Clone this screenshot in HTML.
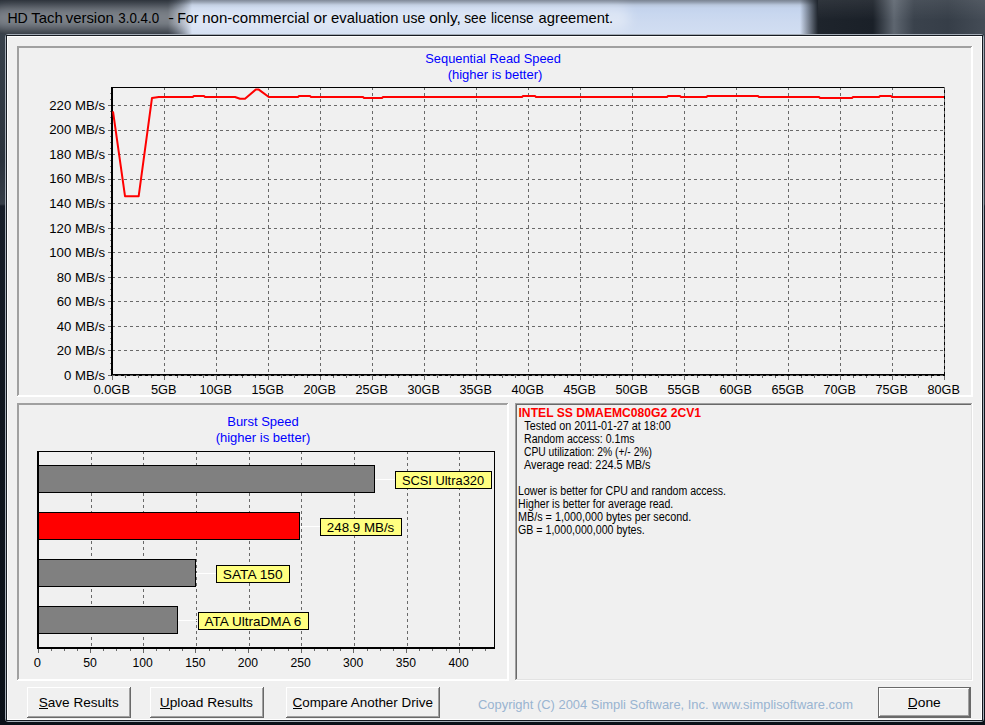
<!DOCTYPE html>
<html><head><meta charset="utf-8"><title>HD Tach</title>
<style>
html,body{margin:0;padding:0;}
body{width:985px;height:725px;overflow:hidden;position:relative;background:#141a23;font-family:"Liberation Sans",sans-serif;}
#frame{position:absolute;left:0;top:0;width:985px;height:725px;
 background:linear-gradient(to bottom,#3a434e 0px,#38414b 40px,#2a323c 160px,#343c46 200px,#363e48 204px,#171e29 206px,#10161f 420px,#0a1018 725px);}
#tb{position:absolute;left:0;top:0;width:985px;height:34px;overflow:hidden;
 background:
  linear-gradient(to right,rgba(52,60,71,1) 0px,rgba(52,60,71,1) 168px,rgba(52,60,71,0) 192px,rgba(30,36,44,0) 800px,rgba(30,36,44,1) 818px,rgba(30,36,44,1) 985px),
  linear-gradient(to bottom,#7a8492 0px,#8f9aab 2px,#b9c7dd 5px,#c4d3ec 8px,#c8d7ef 14px,#cddaf0 22px,#d2def2 34px);}
#tbL{position:absolute;left:0;top:0;width:200px;height:34px;
 background:linear-gradient(to bottom,rgba(30,36,44,.75) 0px,rgba(30,36,44,0) 10px,rgba(30,36,44,0) 24px,rgba(30,36,44,.55) 34px);
 -webkit-mask-image:linear-gradient(to right,#000 0,#000 168px,transparent 192px);mask-image:linear-gradient(to right,#000 0,#000 168px,transparent 192px);}
#tbR{position:absolute;left:818px;top:0;width:167px;height:34px;
 background:linear-gradient(to bottom,rgba(255,255,255,.08) 0,rgba(255,255,255,0) 20px),linear-gradient(to right,#1e242c 0,#1a2028 55px,#5e6670 76px,#3a424c 96px,#363e48 130px,#444c56 167px);}
#glow{position:absolute;left:-10px;top:6px;width:640px;height:24px;border-radius:12px;background:rgba(255,255,255,.36);filter:blur(6px);}
#edgeL{position:absolute;left:5px;top:34px;width:979px;height:688px;box-sizing:border-box;border:1px solid #a3abb5;border-radius:3px;}
#edgeD{position:absolute;left:6px;top:35px;width:977px;height:686px;box-sizing:border-box;border:1px solid #161b22;}
#client{position:absolute;left:7px;top:36px;width:975px;height:684px;background:#f0f0f0;box-sizing:border-box;border:1px solid #fff;}
svg{position:absolute;left:0;top:0;}
text{font-family:"Liberation Sans",sans-serif;}
.a{font-size:13.2px;fill:#000;}
.b{font-size:13px;fill:#0000ff;}
.i{font-size:12px;fill:#000;font-family:"Liberation Sans",sans-serif;}
</style></head><body>
<div id="frame"></div>
<div id="tb"><div id="tbL"></div><div id="tbR"></div><div id="glow"></div></div>
<div id="edgeL"></div><div id="edgeD"></div>
<div id="client"></div>
<svg width="985" height="725" viewBox="0 0 985 725">

<text y="22.5" style="font-size:14.6px;fill:#000"><tspan x="7.4" textLength="20.4" lengthAdjust="spacingAndGlyphs">HD</tspan> <tspan x="31.2" textLength="31.5" lengthAdjust="spacingAndGlyphs">Tach</tspan> <tspan x="65.7" textLength="48.1" lengthAdjust="spacingAndGlyphs">version</tspan> <tspan x="118.3" textLength="40.8" lengthAdjust="spacingAndGlyphs">3.0.4.0</tspan> <tspan x="168.3" textLength="5.7" lengthAdjust="spacingAndGlyphs">-</tspan> <tspan x="177.2" textLength="21.3" lengthAdjust="spacingAndGlyphs">For</tspan> <tspan x="202.2" textLength="107.1" lengthAdjust="spacingAndGlyphs">non-commercial</tspan> <tspan x="313.4" textLength="13.6" lengthAdjust="spacingAndGlyphs">or</tspan> <tspan x="331.1" textLength="67.5" lengthAdjust="spacingAndGlyphs">evaluation</tspan> <tspan x="402.6" textLength="22.6" lengthAdjust="spacingAndGlyphs">use</tspan> <tspan x="429.2" textLength="31.7" lengthAdjust="spacingAndGlyphs">only,</tspan> <tspan x="464.2" textLength="22.1" lengthAdjust="spacingAndGlyphs">see</tspan> <tspan x="490.9" textLength="42.8" lengthAdjust="spacingAndGlyphs">license</tspan> <tspan x="538.6" textLength="74.6" lengthAdjust="spacingAndGlyphs">agreement.</tspan></text>
<g shape-rendering="crispEdges"><rect x="17" y="46" width="956" height="1" fill="#a0a0a0"/><rect x="17" y="46" width="1" height="351" fill="#a0a0a0"/><rect x="18" y="47" width="954" height="1" fill="#a0a0a0"/><rect x="18" y="47" width="1" height="349" fill="#a0a0a0"/><rect x="17" y="396" width="956" height="1" fill="#ffffff"/><rect x="972" y="46" width="1" height="351" fill="#ffffff"/><rect x="18" y="395" width="954" height="1" fill="#ffffff"/><rect x="971" y="47" width="1" height="349" fill="#ffffff"/></g>

<g shape-rendering="crispEdges"><rect x="17" y="403" width="492" height="1" fill="#a0a0a0"/><rect x="17" y="403" width="1" height="278" fill="#a0a0a0"/><rect x="18" y="404" width="490" height="1" fill="#a0a0a0"/><rect x="18" y="404" width="1" height="276" fill="#a0a0a0"/><rect x="17" y="680" width="492" height="1" fill="#ffffff"/><rect x="508" y="403" width="1" height="278" fill="#ffffff"/><rect x="18" y="679" width="490" height="1" fill="#ffffff"/><rect x="507" y="404" width="1" height="276" fill="#ffffff"/></g>

<g shape-rendering="crispEdges"><rect x="515" y="403" width="458" height="1" fill="#a0a0a0"/><rect x="515" y="403" width="1" height="278" fill="#a0a0a0"/><rect x="516" y="404" width="456" height="1" fill="#696969"/><rect x="516" y="404" width="1" height="276" fill="#696969"/><rect x="515" y="680" width="458" height="1" fill="#ffffff"/><rect x="972" y="403" width="1" height="278" fill="#ffffff"/><rect x="516" y="679" width="456" height="1" fill="#e3e3e3"/><rect x="971" y="404" width="1" height="276" fill="#e3e3e3"/></g>

<g shape-rendering="crispEdges">
<line x1="112" y1="375.5" x2="945" y2="375.5" stroke="#696969" stroke-width="1" stroke-dasharray="3,3"/>
<line x1="112" y1="350.5" x2="945" y2="350.5" stroke="#696969" stroke-width="1" stroke-dasharray="3,3"/>
<line x1="112" y1="326.5" x2="945" y2="326.5" stroke="#696969" stroke-width="1" stroke-dasharray="3,3"/>
<line x1="112" y1="301.5" x2="945" y2="301.5" stroke="#696969" stroke-width="1" stroke-dasharray="3,3"/>
<line x1="112" y1="277.5" x2="945" y2="277.5" stroke="#696969" stroke-width="1" stroke-dasharray="3,3"/>
<line x1="112" y1="252.5" x2="945" y2="252.5" stroke="#696969" stroke-width="1" stroke-dasharray="3,3"/>
<line x1="112" y1="228.5" x2="945" y2="228.5" stroke="#696969" stroke-width="1" stroke-dasharray="3,3"/>
<line x1="112" y1="203.5" x2="945" y2="203.5" stroke="#696969" stroke-width="1" stroke-dasharray="3,3"/>
<line x1="112" y1="179.5" x2="945" y2="179.5" stroke="#696969" stroke-width="1" stroke-dasharray="3,3"/>
<line x1="112" y1="154.5" x2="945" y2="154.5" stroke="#696969" stroke-width="1" stroke-dasharray="3,3"/>
<line x1="112" y1="130.5" x2="945" y2="130.5" stroke="#696969" stroke-width="1" stroke-dasharray="3,3"/>
<line x1="112" y1="105.5" x2="945" y2="105.5" stroke="#696969" stroke-width="1" stroke-dasharray="3,3"/>
<line x1="164.5" y1="87" x2="164.5" y2="376" stroke="#696969" stroke-width="1" stroke-dasharray="3,3"/>
<line x1="216.5" y1="87" x2="216.5" y2="376" stroke="#696969" stroke-width="1" stroke-dasharray="3,3"/>
<line x1="268.5" y1="87" x2="268.5" y2="376" stroke="#696969" stroke-width="1" stroke-dasharray="3,3"/>
<line x1="320.5" y1="87" x2="320.5" y2="376" stroke="#696969" stroke-width="1" stroke-dasharray="3,3"/>
<line x1="372.5" y1="87" x2="372.5" y2="376" stroke="#696969" stroke-width="1" stroke-dasharray="3,3"/>
<line x1="424.5" y1="87" x2="424.5" y2="376" stroke="#696969" stroke-width="1" stroke-dasharray="3,3"/>
<line x1="476.5" y1="87" x2="476.5" y2="376" stroke="#696969" stroke-width="1" stroke-dasharray="3,3"/>
<line x1="528.5" y1="87" x2="528.5" y2="376" stroke="#696969" stroke-width="1" stroke-dasharray="3,3"/>
<line x1="580.5" y1="87" x2="580.5" y2="376" stroke="#696969" stroke-width="1" stroke-dasharray="3,3"/>
<line x1="632.5" y1="87" x2="632.5" y2="376" stroke="#696969" stroke-width="1" stroke-dasharray="3,3"/>
<line x1="684.5" y1="87" x2="684.5" y2="376" stroke="#696969" stroke-width="1" stroke-dasharray="3,3"/>
<line x1="736.5" y1="87" x2="736.5" y2="376" stroke="#696969" stroke-width="1" stroke-dasharray="3,3"/>
<line x1="788.5" y1="87" x2="788.5" y2="376" stroke="#696969" stroke-width="1" stroke-dasharray="3,3"/>
<line x1="840.5" y1="87" x2="840.5" y2="376" stroke="#696969" stroke-width="1" stroke-dasharray="3,3"/>
<line x1="892.5" y1="87" x2="892.5" y2="376" stroke="#696969" stroke-width="1" stroke-dasharray="3,3"/>
<line x1="944.5" y1="87" x2="944.5" y2="376" stroke="#696969" stroke-width="1" stroke-dasharray="3,3"/>
<rect x="108" y="375" width="3" height="1" fill="#696969"/>
<rect x="110" y="369" width="1" height="1" fill="#808080"/>
<rect x="110" y="363" width="1" height="1" fill="#808080"/>
<rect x="110" y="357" width="1" height="1" fill="#808080"/>
<rect x="108" y="350" width="3" height="1" fill="#696969"/>
<rect x="110" y="344" width="1" height="1" fill="#808080"/>
<rect x="110" y="338" width="1" height="1" fill="#808080"/>
<rect x="110" y="332" width="1" height="1" fill="#808080"/>
<rect x="108" y="326" width="3" height="1" fill="#696969"/>
<rect x="110" y="320" width="1" height="1" fill="#808080"/>
<rect x="110" y="314" width="1" height="1" fill="#808080"/>
<rect x="110" y="308" width="1" height="1" fill="#808080"/>
<rect x="108" y="301" width="3" height="1" fill="#696969"/>
<rect x="110" y="295" width="1" height="1" fill="#808080"/>
<rect x="110" y="289" width="1" height="1" fill="#808080"/>
<rect x="110" y="283" width="1" height="1" fill="#808080"/>
<rect x="108" y="277" width="3" height="1" fill="#696969"/>
<rect x="110" y="271" width="1" height="1" fill="#808080"/>
<rect x="110" y="265" width="1" height="1" fill="#808080"/>
<rect x="110" y="258" width="1" height="1" fill="#808080"/>
<rect x="108" y="252" width="3" height="1" fill="#696969"/>
<rect x="110" y="246" width="1" height="1" fill="#808080"/>
<rect x="110" y="240" width="1" height="1" fill="#808080"/>
<rect x="110" y="234" width="1" height="1" fill="#808080"/>
<rect x="108" y="228" width="3" height="1" fill="#696969"/>
<rect x="110" y="222" width="1" height="1" fill="#808080"/>
<rect x="110" y="215" width="1" height="1" fill="#808080"/>
<rect x="110" y="209" width="1" height="1" fill="#808080"/>
<rect x="108" y="203" width="3" height="1" fill="#696969"/>
<rect x="110" y="197" width="1" height="1" fill="#808080"/>
<rect x="110" y="191" width="1" height="1" fill="#808080"/>
<rect x="110" y="185" width="1" height="1" fill="#808080"/>
<rect x="108" y="179" width="3" height="1" fill="#696969"/>
<rect x="110" y="172" width="1" height="1" fill="#808080"/>
<rect x="110" y="166" width="1" height="1" fill="#808080"/>
<rect x="110" y="160" width="1" height="1" fill="#808080"/>
<rect x="108" y="154" width="3" height="1" fill="#696969"/>
<rect x="110" y="148" width="1" height="1" fill="#808080"/>
<rect x="110" y="142" width="1" height="1" fill="#808080"/>
<rect x="110" y="136" width="1" height="1" fill="#808080"/>
<rect x="108" y="130" width="3" height="1" fill="#696969"/>
<rect x="110" y="123" width="1" height="1" fill="#808080"/>
<rect x="110" y="117" width="1" height="1" fill="#808080"/>
<rect x="110" y="111" width="1" height="1" fill="#808080"/>
<rect x="108" y="105" width="3" height="1" fill="#696969"/>
<rect x="110" y="99" width="1" height="1" fill="#808080"/>
<rect x="110" y="93" width="1" height="1" fill="#808080"/>
<rect x="112" y="376" width="1" height="4" fill="#696969"/>
<rect x="125" y="376" width="1" height="2" fill="#696969"/>
<rect x="138" y="376" width="1" height="2" fill="#696969"/>
<rect x="151" y="376" width="1" height="2" fill="#696969"/>
<rect x="164" y="376" width="1" height="4" fill="#696969"/>
<rect x="177" y="376" width="1" height="2" fill="#696969"/>
<rect x="190" y="376" width="1" height="2" fill="#696969"/>
<rect x="203" y="376" width="1" height="2" fill="#696969"/>
<rect x="216" y="376" width="1" height="4" fill="#696969"/>
<rect x="229" y="376" width="1" height="2" fill="#696969"/>
<rect x="242" y="376" width="1" height="2" fill="#696969"/>
<rect x="255" y="376" width="1" height="2" fill="#696969"/>
<rect x="268" y="376" width="1" height="4" fill="#696969"/>
<rect x="281" y="376" width="1" height="2" fill="#696969"/>
<rect x="294" y="376" width="1" height="2" fill="#696969"/>
<rect x="307" y="376" width="1" height="2" fill="#696969"/>
<rect x="320" y="376" width="1" height="4" fill="#696969"/>
<rect x="333" y="376" width="1" height="2" fill="#696969"/>
<rect x="346" y="376" width="1" height="2" fill="#696969"/>
<rect x="359" y="376" width="1" height="2" fill="#696969"/>
<rect x="372" y="376" width="1" height="4" fill="#696969"/>
<rect x="385" y="376" width="1" height="2" fill="#696969"/>
<rect x="398" y="376" width="1" height="2" fill="#696969"/>
<rect x="411" y="376" width="1" height="2" fill="#696969"/>
<rect x="424" y="376" width="1" height="4" fill="#696969"/>
<rect x="437" y="376" width="1" height="2" fill="#696969"/>
<rect x="450" y="376" width="1" height="2" fill="#696969"/>
<rect x="463" y="376" width="1" height="2" fill="#696969"/>
<rect x="476" y="376" width="1" height="4" fill="#696969"/>
<rect x="489" y="376" width="1" height="2" fill="#696969"/>
<rect x="502" y="376" width="1" height="2" fill="#696969"/>
<rect x="515" y="376" width="1" height="2" fill="#696969"/>
<rect x="528" y="376" width="1" height="4" fill="#696969"/>
<rect x="541" y="376" width="1" height="2" fill="#696969"/>
<rect x="554" y="376" width="1" height="2" fill="#696969"/>
<rect x="567" y="376" width="1" height="2" fill="#696969"/>
<rect x="580" y="376" width="1" height="4" fill="#696969"/>
<rect x="593" y="376" width="1" height="2" fill="#696969"/>
<rect x="606" y="376" width="1" height="2" fill="#696969"/>
<rect x="619" y="376" width="1" height="2" fill="#696969"/>
<rect x="632" y="376" width="1" height="4" fill="#696969"/>
<rect x="645" y="376" width="1" height="2" fill="#696969"/>
<rect x="658" y="376" width="1" height="2" fill="#696969"/>
<rect x="671" y="376" width="1" height="2" fill="#696969"/>
<rect x="684" y="376" width="1" height="4" fill="#696969"/>
<rect x="697" y="376" width="1" height="2" fill="#696969"/>
<rect x="710" y="376" width="1" height="2" fill="#696969"/>
<rect x="723" y="376" width="1" height="2" fill="#696969"/>
<rect x="736" y="376" width="1" height="4" fill="#696969"/>
<rect x="749" y="376" width="1" height="2" fill="#696969"/>
<rect x="762" y="376" width="1" height="2" fill="#696969"/>
<rect x="775" y="376" width="1" height="2" fill="#696969"/>
<rect x="788" y="376" width="1" height="4" fill="#696969"/>
<rect x="801" y="376" width="1" height="2" fill="#696969"/>
<rect x="814" y="376" width="1" height="2" fill="#696969"/>
<rect x="827" y="376" width="1" height="2" fill="#696969"/>
<rect x="840" y="376" width="1" height="4" fill="#696969"/>
<rect x="853" y="376" width="1" height="2" fill="#696969"/>
<rect x="866" y="376" width="1" height="2" fill="#696969"/>
<rect x="879" y="376" width="1" height="2" fill="#696969"/>
<rect x="892" y="376" width="1" height="4" fill="#696969"/>
<rect x="905" y="376" width="1" height="2" fill="#696969"/>
<rect x="918" y="376" width="1" height="2" fill="#696969"/>
<rect x="931" y="376" width="1" height="2" fill="#696969"/>
<rect x="944" y="376" width="1" height="4" fill="#696969"/>
<rect x="111" y="87" width="834" height="1" fill="#000"/>
<rect x="111" y="87" width="2" height="289" fill="#000"/>
<rect x="111" y="374" width="834" height="2" fill="#000"/>
<rect x="944" y="87" width="1" height="289" fill="#000"/>
<line x1="112" y1="375.5" x2="945" y2="375.5" stroke="#696969" stroke-width="1" stroke-dasharray="3,3"/>
<line x1="944.5" y1="87" x2="944.5" y2="374" stroke="#696969" stroke-width="1" stroke-dasharray="3,3"/>
</g>
<polyline fill="none" stroke="#ff0000" stroke-width="2" stroke-linejoin="round" points="113,111.4 125,196.2 138.7,196.2 152,97.9 158.8,97 192.8,97 193.8,96 204,96 205,97 235,97 240,98.8 245,98.8 255.8,89.6 258.8,89.6 268.8,97 298,97 299,96 310,96 311,97 363,97 364,98 382,98 383,97 522,97 523,96 535,96 536,97 667,97 668,96 680,96 681,97 706.5,97 707.5,96 758,96 759,97 819,97 820,98 852,98 853,97 879,97 880,96 891,96 892,97 944,97"/>
<text class="a" x="105" y="379.8" text-anchor="end">0 MB/s</text>
<text class="a" x="105" y="355.3" text-anchor="end">20 MB/s</text>
<text class="a" x="105" y="330.7" text-anchor="end">40 MB/s</text>
<text class="a" x="105" y="306.2" text-anchor="end">60 MB/s</text>
<text class="a" x="105" y="281.6" text-anchor="end">80 MB/s</text>
<text class="a" x="105" y="257.1" text-anchor="end">100 MB/s</text>
<text class="a" x="105" y="232.5" text-anchor="end">120 MB/s</text>
<text class="a" x="105" y="208.0" text-anchor="end">140 MB/s</text>
<text class="a" x="105" y="183.4" text-anchor="end">160 MB/s</text>
<text class="a" x="105" y="158.9" text-anchor="end">180 MB/s</text>
<text class="a" x="105" y="134.3" text-anchor="end">200 MB/s</text>
<text class="a" x="105" y="109.8" text-anchor="end">220 MB/s</text>
<text class="a" x="93.4" y="393.5" textLength="36.6" lengthAdjust="spacingAndGlyphs">0.0GB</text>
<text class="a" x="150.9" y="393.5" textLength="25.6" lengthAdjust="spacingAndGlyphs">5GB</text>
<text class="a" x="199.5" y="393.5" textLength="32.4" lengthAdjust="spacingAndGlyphs">10GB</text>
<text class="a" x="251.5" y="393.5" textLength="32.4" lengthAdjust="spacingAndGlyphs">15GB</text>
<text class="a" x="303.5" y="393.5" textLength="32.4" lengthAdjust="spacingAndGlyphs">20GB</text>
<text class="a" x="355.5" y="393.5" textLength="32.4" lengthAdjust="spacingAndGlyphs">25GB</text>
<text class="a" x="407.5" y="393.5" textLength="32.4" lengthAdjust="spacingAndGlyphs">30GB</text>
<text class="a" x="459.5" y="393.5" textLength="32.4" lengthAdjust="spacingAndGlyphs">35GB</text>
<text class="a" x="511.5" y="393.5" textLength="32.4" lengthAdjust="spacingAndGlyphs">40GB</text>
<text class="a" x="563.5" y="393.5" textLength="32.4" lengthAdjust="spacingAndGlyphs">45GB</text>
<text class="a" x="615.5" y="393.5" textLength="32.4" lengthAdjust="spacingAndGlyphs">50GB</text>
<text class="a" x="667.5" y="393.5" textLength="32.4" lengthAdjust="spacingAndGlyphs">55GB</text>
<text class="a" x="719.5" y="393.5" textLength="32.4" lengthAdjust="spacingAndGlyphs">60GB</text>
<text class="a" x="771.5" y="393.5" textLength="32.4" lengthAdjust="spacingAndGlyphs">65GB</text>
<text class="a" x="823.5" y="393.5" textLength="32.4" lengthAdjust="spacingAndGlyphs">70GB</text>
<text class="a" x="875.5" y="393.5" textLength="32.4" lengthAdjust="spacingAndGlyphs">75GB</text>
<text class="a" x="927.5" y="393.5" textLength="32.4" lengthAdjust="spacingAndGlyphs">80GB</text>
<text class="b" x="425.3" y="62.5" textLength="135.6" lengthAdjust="spacingAndGlyphs">Sequential Read Speed</text>
<text class="b" x="495" y="78.5" text-anchor="middle">(higher is better)</text>
<g shape-rendering="crispEdges">
<line x1="91.5" y1="451" x2="91.5" y2="649" stroke="#696969" stroke-width="1" stroke-dasharray="3,3"/>
<line x1="143.5" y1="451" x2="143.5" y2="649" stroke="#696969" stroke-width="1" stroke-dasharray="3,3"/>
<line x1="196.5" y1="451" x2="196.5" y2="649" stroke="#696969" stroke-width="1" stroke-dasharray="3,3"/>
<line x1="249.5" y1="451" x2="249.5" y2="649" stroke="#696969" stroke-width="1" stroke-dasharray="3,3"/>
<line x1="301.5" y1="451" x2="301.5" y2="649" stroke="#696969" stroke-width="1" stroke-dasharray="3,3"/>
<line x1="354.5" y1="451" x2="354.5" y2="649" stroke="#696969" stroke-width="1" stroke-dasharray="3,3"/>
<line x1="407.5" y1="451" x2="407.5" y2="649" stroke="#696969" stroke-width="1" stroke-dasharray="3,3"/>
<line x1="459.5" y1="451" x2="459.5" y2="649" stroke="#696969" stroke-width="1" stroke-dasharray="3,3"/>
<rect x="38" y="649" width="1" height="4" fill="#696969"/>
<rect x="51" y="649" width="1" height="2" fill="#696969"/>
<rect x="64" y="649" width="1" height="2" fill="#696969"/>
<rect x="77" y="649" width="1" height="2" fill="#696969"/>
<rect x="90" y="649" width="1" height="4" fill="#696969"/>
<rect x="103" y="649" width="1" height="2" fill="#696969"/>
<rect x="116" y="649" width="1" height="2" fill="#696969"/>
<rect x="130" y="649" width="1" height="2" fill="#696969"/>
<rect x="143" y="649" width="1" height="4" fill="#696969"/>
<rect x="156" y="649" width="1" height="2" fill="#696969"/>
<rect x="169" y="649" width="1" height="2" fill="#696969"/>
<rect x="182" y="649" width="1" height="2" fill="#696969"/>
<rect x="195" y="649" width="1" height="4" fill="#696969"/>
<rect x="209" y="649" width="1" height="2" fill="#696969"/>
<rect x="222" y="649" width="1" height="2" fill="#696969"/>
<rect x="235" y="649" width="1" height="2" fill="#696969"/>
<rect x="248" y="649" width="1" height="4" fill="#696969"/>
<rect x="261" y="649" width="1" height="2" fill="#696969"/>
<rect x="274" y="649" width="1" height="2" fill="#696969"/>
<rect x="288" y="649" width="1" height="2" fill="#696969"/>
<rect x="301" y="649" width="1" height="4" fill="#696969"/>
<rect x="314" y="649" width="1" height="2" fill="#696969"/>
<rect x="327" y="649" width="1" height="2" fill="#696969"/>
<rect x="340" y="649" width="1" height="2" fill="#696969"/>
<rect x="353" y="649" width="1" height="4" fill="#696969"/>
<rect x="367" y="649" width="1" height="2" fill="#696969"/>
<rect x="380" y="649" width="1" height="2" fill="#696969"/>
<rect x="393" y="649" width="1" height="2" fill="#696969"/>
<rect x="406" y="649" width="1" height="4" fill="#696969"/>
<rect x="419" y="649" width="1" height="2" fill="#696969"/>
<rect x="432" y="649" width="1" height="2" fill="#696969"/>
<rect x="446" y="649" width="1" height="2" fill="#696969"/>
<rect x="459" y="649" width="1" height="4" fill="#696969"/>
<rect x="472" y="649" width="1" height="2" fill="#696969"/>
<rect x="485" y="649" width="1" height="2" fill="#696969"/>
<rect x="37" y="451" width="458" height="1" fill="#000"/>
<rect x="494" y="451" width="1" height="197" fill="#000"/>
<rect x="37" y="451" width="2" height="198" fill="#000"/>
<rect x="37" y="647" width="458" height="2" fill="#000"/>
<rect x="39" y="465" width="336" height="28" fill="#000"/>
<rect x="39" y="466" width="335" height="26" fill="#808080"/>
<rect x="375" y="479" width="20" height="1" fill="#fff"/>
<rect x="395" y="471" width="97" height="18" fill="#000"/>
<rect x="396" y="472" width="95" height="16" fill="#ffff80"/>
<rect x="39" y="512" width="261" height="28" fill="#000"/>
<rect x="39" y="513" width="260" height="26" fill="#ff0000"/>
<rect x="300" y="526" width="20" height="1" fill="#fff"/>
<rect x="320" y="518" width="82" height="18" fill="#000"/>
<rect x="321" y="519" width="80" height="16" fill="#ffff80"/>
<rect x="39" y="559" width="157" height="28" fill="#000"/>
<rect x="39" y="560" width="156" height="26" fill="#808080"/>
<rect x="196" y="573" width="20" height="1" fill="#fff"/>
<rect x="216" y="565" width="74" height="18" fill="#000"/>
<rect x="217" y="566" width="72" height="16" fill="#ffff80"/>
<rect x="39" y="606" width="139" height="28" fill="#000"/>
<rect x="39" y="607" width="138" height="26" fill="#808080"/>
<rect x="178" y="620" width="20" height="1" fill="#fff"/>
<rect x="198" y="612" width="111" height="18" fill="#000"/>
<rect x="199" y="613" width="109" height="16" fill="#ffff80"/>
</g>
<text class="a" x="401.9" y="484.5" textLength="82.2" lengthAdjust="spacingAndGlyphs">SCSI Ultra320</text>
<text class="a" x="326.8" y="531.5" textLength="67.5" lengthAdjust="spacingAndGlyphs">248.9 MB/s</text>
<text class="a" x="222.8" y="578.5" textLength="59.8" lengthAdjust="spacingAndGlyphs">SATA 150</text>
<text class="a" x="204.5" y="625.5" textLength="96.8" lengthAdjust="spacingAndGlyphs">ATA UltraDMA 6</text>
<text class="a" x="33.8" y="667" textLength="7.2" lengthAdjust="spacingAndGlyphs">0</text>
<text class="a" x="83.2" y="667" textLength="13.7" lengthAdjust="spacingAndGlyphs">50</text>
<text class="a" x="132.6" y="667" textLength="20.3" lengthAdjust="spacingAndGlyphs">100</text>
<text class="a" x="185.2" y="667" textLength="20.3" lengthAdjust="spacingAndGlyphs">150</text>
<text class="a" x="237.8" y="667" textLength="20.3" lengthAdjust="spacingAndGlyphs">200</text>
<text class="a" x="290.5" y="667" textLength="20.3" lengthAdjust="spacingAndGlyphs">250</text>
<text class="a" x="343.1" y="667" textLength="20.3" lengthAdjust="spacingAndGlyphs">300</text>
<text class="a" x="395.8" y="667" textLength="20.3" lengthAdjust="spacingAndGlyphs">350</text>
<text class="a" x="448.4" y="667" textLength="20.3" lengthAdjust="spacingAndGlyphs">400</text>
<text class="b" x="263" y="426" text-anchor="middle">Burst Speed</text>
<text class="b" x="263" y="442" text-anchor="middle">(higher is better)</text>
<text x="518.5" y="416.8" style="font-size:12.3px;font-weight:bold;fill:#ff0000" textLength="182.5" lengthAdjust="spacingAndGlyphs">INTEL SS DMAEMC080G2 2CV1</text>
<text class="i" x="524.3" y="430" textLength="146.6" lengthAdjust="spacingAndGlyphs">Tested on 2011-01-27 at 18:00</text>
<text class="i" x="524" y="443" textLength="110.5" lengthAdjust="spacingAndGlyphs">Random access: 0.1ms</text>
<text class="i" x="524" y="456" textLength="128" lengthAdjust="spacingAndGlyphs">CPU utilization: 2% (+/- 2%)</text>
<text class="i" x="524" y="469" textLength="126.5" lengthAdjust="spacingAndGlyphs">Average read: 224.5 MB/s</text>
<text class="i" x="518" y="495" textLength="208" lengthAdjust="spacingAndGlyphs">Lower is better for CPU and random access.</text>
<text class="i" x="518" y="508" textLength="155.3" lengthAdjust="spacingAndGlyphs">Higher is better for average read.</text>
<text class="i" x="518" y="521" textLength="173.2" lengthAdjust="spacingAndGlyphs">MB/s = 1,000,000 bytes per second.</text>
<text class="i" x="518" y="534" textLength="126.8" lengthAdjust="spacingAndGlyphs">GB = 1,000,000,000 bytes.</text>
<g shape-rendering="crispEdges"><rect x="27" y="687" width="104" height="31" fill="#696969"/><rect x="27" y="687" width="103" height="30" fill="#ffffff"/><rect x="28" y="688" width="102" height="29" fill="#a0a0a0"/><rect x="28" y="688" width="101" height="28" fill="#f0f0f0"/></g>
<text class="a" x="38.7" y="707.3" textLength="80.0" lengthAdjust="spacingAndGlyphs">Save Results</text>
<rect x="39" y="708" width="9" height="1" fill="#000" shape-rendering="crispEdges"/>
<g shape-rendering="crispEdges"><rect x="150" y="687" width="114" height="31" fill="#696969"/><rect x="150" y="687" width="113" height="30" fill="#ffffff"/><rect x="151" y="688" width="112" height="29" fill="#a0a0a0"/><rect x="151" y="688" width="111" height="28" fill="#f0f0f0"/></g>
<text class="a" x="159.8" y="707.3" textLength="93.2" lengthAdjust="spacingAndGlyphs">Upload Results</text>
<rect x="160" y="708" width="10" height="1" fill="#000" shape-rendering="crispEdges"/>
<g shape-rendering="crispEdges"><rect x="286" y="687" width="154" height="31" fill="#696969"/><rect x="286" y="687" width="153" height="30" fill="#ffffff"/><rect x="287" y="688" width="152" height="29" fill="#a0a0a0"/><rect x="287" y="688" width="151" height="28" fill="#f0f0f0"/></g>
<text class="a" x="292.5" y="707.3" textLength="140.4" lengthAdjust="spacingAndGlyphs">Compare Another Drive</text>
<rect x="293" y="708" width="9" height="1" fill="#000" shape-rendering="crispEdges"/>
<g shape-rendering="crispEdges"><rect x="878" y="687" width="93" height="31" fill="#696969"/><rect x="879" y="688" width="91" height="29" fill="#696969"/><rect x="879" y="688" width="90" height="28" fill="#ffffff"/><rect x="880" y="689" width="89" height="27" fill="#a0a0a0"/><rect x="880" y="689" width="88" height="26" fill="#f0f0f0"/></g>
<text class="a" x="907.8" y="707.3" textLength="33.0" lengthAdjust="spacingAndGlyphs">Done</text>
<rect x="908" y="708" width="9" height="1" fill="#000" shape-rendering="crispEdges"/>
<text x="478" y="709" style="font-size:13px;fill:#99b4d1" textLength="375" lengthAdjust="spacingAndGlyphs">Copyright (C) 2004 Simpli Software, Inc. www.simplisoftware.com</text>
</svg></body></html>
